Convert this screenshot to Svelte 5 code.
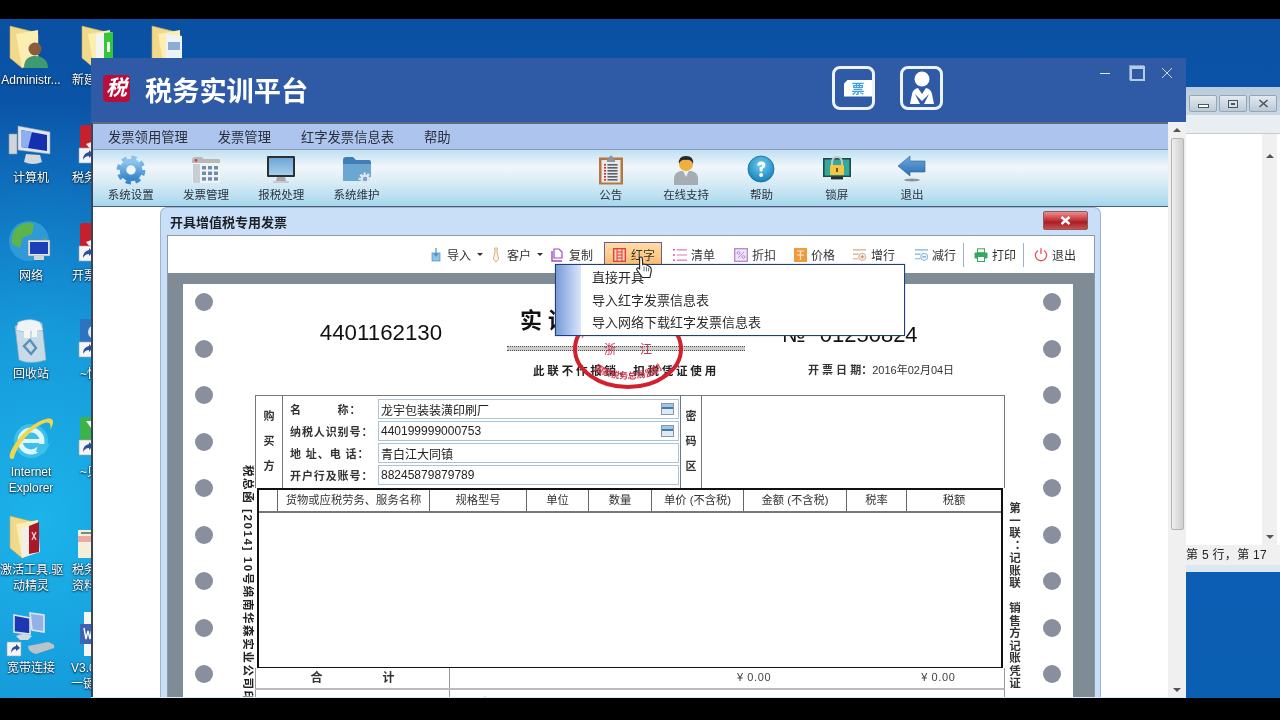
<script>
	// desktop shortcuts, the left column is fully visible, the second is cut by the app window
	const shortcuts = [
		{ icon: "userFolder", x: 8, y: 24, ly: 72, label: ["Administr..."], lx: 0, lw: 62 },
		{ icon: "greenFolder", x: 80, y: 24, ly: 72, label: ["新建文件夹"], lx: 72, lw: 70 },
		{ icon: "plainFolder", x: 150, y: 24, ly: 72, label: [], lx: 150, lw: 40 },
		{ icon: "computer", x: 8, y: 124, ly: 170, label: ["计算机"], lx: 0, lw: 62 },
		{ icon: "redApp", x: 78, y: 124, ly: 170, label: ["税务实训"], lx: 72, lw: 70 },
		{ icon: "globe", x: 8, y: 220, ly: 268, label: ["网络"], lx: 0, lw: 62 },
		{ icon: "redApp", x: 78, y: 222, ly: 268, label: ["开票系统"], lx: 72, lw: 70 },
		{ icon: "bin", x: 10, y: 318, ly: 366, label: ["回收站"], lx: 0, lw: 62 },
		{ icon: "blueLink", x: 78, y: 318, ly: 366, label: ["~快捷"], lx: 80, lw: 70 },
		{ icon: "ie", x: 8, y: 416, ly: 464, label: ["Internet", "Explorer"], lx: 0, lw: 62 },
		{ icon: "greenLink", x: 78, y: 416, ly: 464, label: ["~贝"], lx: 80, lw: 70 },
		{ icon: "redFolder", x: 8, y: 514, ly: 562, label: ["激活工具.驱", "动精灵"], lx: 0, lw: 62 },
		{ icon: "doc", x: 78, y: 530, ly: 562, label: ["税务实", "资料"], lx: 72, lw: 70 },
		{ icon: "network", x: 6, y: 612, ly: 660, label: ["宽带连接"], lx: 0, lw: 62 },
		{ icon: "word", x: 78, y: 612, ly: 660, label: ["V3.0", "一键"], lx: 71, lw: 70 }
	];

	const menus = ["发票领用管理", "发票管理", "红字发票信息表", "帮助"];
	const toolsLeft = [
		{ icon: "gear", label: "系统设置" },
		{ icon: "calendar", label: "发票管理" },
		{ icon: "monitor", label: "报税处理" },
		{ icon: "gearFolder", label: "系统维护" }
	];
	const toolsRight = [
		{ icon: "clipboard", label: "公告" },
		{ icon: "agent", label: "在线支持" },
		{ icon: "help", label: "帮助" },
		{ icon: "lock", label: "锁屏" },
		{ icon: "back", label: "退出" }
	];

	const actions = [
		{ icon: "aImport", label: "导入", caret: true, w: 60 },
		{ icon: "aTie", label: "客户", caret: true, w: 62 },
		{ icon: "aCopy", label: "复制", w: 55 },
		{ icon: "aRed", label: "红字", w: 58, active: true },
		{ icon: "aList", label: "清单", w: 61 },
		{ icon: "aDisc", label: "折扣", w: 59 },
		{ icon: "aPrice", label: "价格", w: 60 },
		{ icon: "aAdd", label: "增行", w: 61 },
		{ icon: "aSub", label: "减行", w: 51, sep: true },
		{ icon: "aPrint", label: "打印", w: 51, sep: true },
		{ icon: "aExit", label: "退出", w: 43 }
	];

	const popup = ["直接开具", "导入红字发票信息表", "导入网络下载红字发票信息表"];

	const buyer = [
		{ label: "名　　　称：", value: "龙宇包装装潢印刷厂", pick: true },
		{ label: "纳税人识别号：", value: "440199999000753", pick: true },
		{ label: "地 址、电 话：", value: "青白江大同镇" },
		{ label: "开户行及账号：", value: "88245879879789" }
	];

	const columns = [
		{ w: 19, t: "" },
		{ w: 152, t: "货物或应税劳务、服务名称" },
		{ w: 97, t: "规格型号" },
		{ w: 62, t: "单位" },
		{ w: 63, t: "数量" },
		{ w: 92, t: "单价 (不含税)" },
		{ w: 103, t: "金额 (不含税)" },
		{ w: 60, t: "税率" },
		{ w: 98, t: "税额" }
	];

	const holes = Array.from({ length: 9 });
</script>

{#snippet glyph(name)}
	{#if name === "userFolder" || name === "greenFolder" || name === "plainFolder" || name === "redFolder"}
		<svg width="42" height="46" viewBox="0 0 42 46">
			<path d="M2 2 L26 8 L30 10 V36 L14 44 L2 34 Z" fill="#f0d98a" stroke="#c9a95a" stroke-width=".6" />
			<path d="M8 10 L30 6 V36 L14 44 Z" fill="#fbeeb0" />
			{#if name === "greenFolder"}
				<path d="M16 10 L33 8 V40 L16 44 Z" fill="#f2f5f2" />
				<path d="M24 9 L33 8 V40 L24 42 Z" fill="#35c53a" />
				<path d="M27 18 h3 v10 h-3 Z" fill="#e8fbe8" />
			{/if}
			{#if name === "plainFolder"}
				<path d="M16 10 L32 12 V44 L16 44 Z" fill="#eef3f8" />
				<path d="M18 18 h12 v8 h-12 Z" fill="#8aaed0" />
			{/if}
			{#if name === "redFolder"}
				<path d="M13 14 L30 8 L32 38 L14 44 Z" fill="#f2efe8" />
				<path d="M21 12 L31 8 V38 L21 40 Z" fill="#a81826" />
				<path d="M24 18 l4 8 M28 18 l-4 8" stroke="#f5c8c8" stroke-width="1.4" />
			{/if}
			{#if name === "userFolder"}
				<circle cx="27" cy="25" r="6.5" fill="#8a5c3c" />
				<path d="M16 44 C16 34 22 32 27 32 C33 32 40 35 40 44 Z" fill="#3f9a72" />
			{/if}
		</svg>
	{:else if name === "computer"}
		<svg width="44" height="44" viewBox="0 0 44 44">
			<rect x="1" y="10" width="8" height="20" fill="#cfd6da" stroke="#8a979e" stroke-width=".6" />
			<path d="M10 2 L42 8 V30 L10 26 Z" fill="#dfe6ea" stroke="#98a5ad" stroke-width=".6" />
			<path d="M13 6 L39 11 V27 L13 23 Z" fill="#1430b0" />
			<path d="M13 6 L24 8 L20 24 L13 23 Z" fill="#8fb0ee" />
			<path d="M18 30 L32 31 L34 38 Q25 42 16 38 Z" fill="#d3d9dc" />
		</svg>
	{:else if name === "redApp" || name === "greenLink" || name === "blueLink"}
		<svg width="34" height="42" viewBox="0 0 34 42">
			{#if name === "greenLink"}
				<rect x="2" y="1" width="30" height="27" rx="2" fill="#3ab34a" /><path d="M8 5 L24 5 L16 16 Z" fill="#f4fff0" />
			{:else if name === "blueLink"}
				<rect x="2" y="1" width="30" height="27" rx="2" fill="#2d74c0" /><circle cx="17" cy="14" r="7" fill="#d6e8f8" />
			{:else}
				<rect x="2" y="1" width="30" height="27" rx="3" fill="#c6202f" /><path d="M8 20 Q18 18 24 6 Q24 20 12 25 Z" fill="#fbeaea" />
			{/if}
			<rect x="1" y="24" width="15" height="15" fill="#f5f5f5" stroke="#9aa3ab" stroke-width=".6" />
			<path d="M5 36 Q5 29 11 28 V26 L15 30 L11 34 V32 Q7 32 5 36 Z" fill="#2a4f9c" />
		</svg>
	{:else if name === "globe"}
		<svg width="44" height="44" viewBox="0 0 44 44">
			<circle cx="21" cy="21" r="20" fill="#2f9ad8" />
			<path d="M8 8 Q18 0 26 4 L24 14 L14 18 L12 28 L4 24 Q3 14 8 8 Z" fill="#5cb54a" />
			<path d="M26 24 L38 18 L40 24 L30 38 L26 34 Z" fill="#5cb54a" />
			<rect x="20" y="20" width="22" height="16" fill="#dfe6ea" stroke="#7c8a92" stroke-width=".6" />
			<rect x="22" y="22" width="18" height="12" fill="#1d3fb5" />
			<path d="M26 36 h10 v4 h-10 Z" fill="#cfd6da" />
		</svg>
	{:else if name === "bin"}
		<svg width="40" height="46" viewBox="0 0 40 46">
			<path d="M5 8 L32 5 L36 42 Q20 47 9 42 Z" fill="#c8dbe8" stroke="#8ea6b6" stroke-width=".7" />
			<path d="M8 4 Q20 -1 30 4 L33 12 Q18 16 6 12 Z" fill="#eef4f8" stroke="#9fb4c2" stroke-width=".6" />
			<path d="M14 12 h6 v8 h-6 Z M22 10 h5 v9 h-5 Z" fill="#f5f5f5" />
			<path d="M14 28 L20 22 L26 30 L21 36 Z" fill="none" stroke="#5d8fb8" stroke-width="2.4" />
		</svg>
	{:else if name === "ie"}
		<svg width="46" height="46" viewBox="0 0 46 46">
			<ellipse cx="23" cy="25" rx="17" ry="17" fill="#3cc0ea" />
			<circle cx="23" cy="25" r="11" fill="none" stroke="#dff6fd" stroke-width="5" />
			<rect x="12" y="23" width="24" height="4" fill="#dff6fd" />
			<path d="M30 28 H42 L36 38 L28 36 Z" fill="#3cc0ea" />
			<path d="M2 42 C-1 36 18 8 38 3 C46 1 47 6 42 14 C44 6 40 5 34 8 C20 15 8 32 6 42 Q4 44 2 42 Z" fill="#f1d64a" />
		</svg>
	{:else if name === "doc"}
		<svg width="16" height="28" viewBox="0 0 16 28">
			<rect width="16" height="28" fill="#f4efd9" /><rect y="6" width="16" height="6" fill="#e9a9a4" /><rect x="3" y="2" width="10" height="2" fill="#7a8a7a" />
		</svg>
	{:else if name === "network"}
		<svg width="50" height="50" viewBox="0 0 50 50">
			<path d="M8 3 L24 6 V22 L8 20 Z" fill="#1c36b4" stroke="#dfe6ea" stroke-width="1.6" />
			<path d="M24 1 L38 3 V20 L26 18 Z" fill="#93b1e8" stroke="#dfe6ea" stroke-width="1.6" />
			<path d="M10 24 Q18 20 26 24 L22 28 H14 Z" fill="#d3d9dc" />
			<rect x="1" y="30" width="14" height="14" fill="#f5f5f5" stroke="#9aa3ab" stroke-width=".6" />
			<path d="M5 41 Q5 35 10 34 V32 L14 36 L10 39 V37 Q7 37 5 41 Z" fill="#2a4f9c" />
			<path d="M22 34 L42 30 Q50 32 48 36 L30 42 Q22 40 22 34 Z" fill="#b9c3c8" />
		</svg>
	{:else if name === "word"}
		<svg width="34" height="46" viewBox="0 0 34 46">
			<rect x="6" y="0" width="24" height="44" fill="#f4f6f8" /><rect x="2" y="12" width="17" height="20" fill="#3e63b4" />
			<path d="M6 16 l2 11 l2 -8 l2 8 l2 -11" fill="none" stroke="#fff" stroke-width="1.4" />
		</svg>
	{:else if name === "gear"}
		<svg width="30" height="30" viewBox="0 0 30 30">
			<defs><linearGradient id="gearFill" x1="0" y1="0" x2="0" y2="1"><stop offset="0" stop-color="#8cc4ee" /><stop offset="1" stop-color="#3b87cd" /></linearGradient></defs>
			<circle cx="15" cy="15" r="12.4" fill="none" stroke="url(#gearFill)" stroke-width="4" stroke-dasharray="5.2 4.53" />
			<circle cx="15" cy="15" r="8" fill="none" stroke="url(#gearFill)" stroke-width="6.5" />
			<circle cx="15" cy="15" r="3.6" fill="#eef6fc" />
		</svg>
	{:else if name === "calendar"}
		<svg width="30" height="30" viewBox="0 0 30 30">
			<path d="M1 6 Q1 2 4 2 H11 L13 4 H28 Q29 4 29 6 V28 H1 Z" fill="#b8b8b8" />
			<rect x="1" y="8" width="28" height="20" fill="#f2f2f2" />
			<circle cx="5" cy="5.5" r="1.4" fill="#d34040" />
			<rect x="2" y="9" width="7" height="19" fill="#c9ced6" />
			{#each [0, 1, 2] as r}
				{#each [0, 1, 2] as c}
					<rect x={11 + c * 6} y={11 + r * 5.6} width="4" height="3.4" fill="#6a8cb0" />
				{/each}
			{/each}
		</svg>
	{:else if name === "monitor"}
		<svg width="30" height="30" viewBox="0 0 30 30">
			<rect x="1" y="1" width="28" height="21" rx="1" fill="#2c2f33" />
			<defs><linearGradient id="scr" x1="0" y1="0" x2="0" y2="1"><stop offset="0" stop-color="#6da6d8" /><stop offset="1" stop-color="#a8cdea" /></linearGradient></defs>
			<rect x="3" y="3" width="24" height="17" fill="url(#scr)" />
			<path d="M11 22 H19 L20 26 H10 Z" fill="#a9a9a9" /><rect x="7" y="26" width="16" height="2" rx="1" fill="#c9c9c9" />
		</svg>
	{:else if name === "gearFolder"}
		<svg width="30" height="30" viewBox="0 0 30 30">
			<path d="M1 5 Q1 2 4 2 H11 L14 5 H27 Q29 5 29 7 V25 Q29 26 27 26 H3 Q1 26 1 25 Z" fill="#3f7fb5" />
			<path d="M1 9 H29 V25 Q29 26 27 26 H3 Q1 26 1 25 Z" fill="#6ea6d2" />
			<circle cx="23" cy="24" r="5" fill="none" stroke="#e8ecef" stroke-width="3" stroke-dasharray="2 1.6" />
			<circle cx="23" cy="24" r="3.4" fill="none" stroke="#dfe4e8" stroke-width="2.4" />
		</svg>
	{:else if name === "clipboard"}
		<svg width="26" height="30" viewBox="0 0 26 30">
			<rect x="1" y="2.5" width="24" height="27" fill="#b4783e" />
			<rect x="3.5" y="5" width="19" height="22.5" fill="#e9e9ec" />
			<path d="M9 4 H11 Q11 0.5 13 0.5 Q15 0.5 15 4 H17 V7 H9 Z" fill="#8a98a5" />
			{#each [9, 12, 15, 18, 21, 24] as ly}
				<rect x="6" y={ly} width="2" height="1.6" fill="#cc2f3a" />
				<rect x="9.5" y={ly} width="10" height="1.6" fill="#5c6168" />
			{/each}
		</svg>
	{:else if name === "agent"}
		<svg width="28" height="30" viewBox="0 0 28 30">
			<path d="M2 30 V24 Q2 17 9 16 H19 Q26 17 26 24 V30 Z" fill="#a5adb2" />
			<path d="M11 16 L14 22 L17 16 Z" fill="#eef0f0" />
			<circle cx="14" cy="9" r="7" fill="#f0b040" />
			<path d="M7 9 Q6 1 14 1 Q22 1 21 9 Q19 4 14 5 Q9 4 7 9 Z" fill="#26282c" />
		</svg>
	{:else if name === "help"}
		<svg width="28" height="28" viewBox="0 0 28 28">
			<defs><radialGradient id="helpFill" cx=".5" cy=".35" r=".7"><stop offset="0" stop-color="#6fd0ef" /><stop offset="1" stop-color="#1277b8" /></radialGradient></defs>
			<circle cx="14" cy="14" r="13" fill="url(#helpFill)" stroke="#0f6aa6" stroke-width=".8" />
			<path d="M10 10.5 Q10.5 6.5 14.4 6.6 Q18.6 7 18.4 10.4 Q18 12.6 15.6 13.8 L15.4 16.6 H12.8 L12.6 12.4 Q15.4 11.6 15.4 10.2 Q14.6 8.6 13 10.6 Z" fill="#fff" />
			<circle cx="14.1" cy="20" r="1.9" fill="#fff" />
		</svg>
	{:else if name === "lock"}
		<svg width="30" height="28" viewBox="0 0 30 28">
			<rect x="1" y="3" width="28" height="19" fill="#1d4a4e" />
			<rect x="2.6" y="4.6" width="24.8" height="16" fill="#35a89a" />
			<path d="M10 11 V8 Q10 2 15 2 Q20 2 20 8 V11" fill="none" stroke="#c2c7c9" stroke-width="2" />
			<rect x="8" y="10" width="14" height="10" rx="1" fill="#f1c83f" />
			<rect x="14" y="13" width="2" height="4" fill="#6a5a10" />
			<rect x="9" y="22" width="12" height="2.4" fill="#2a2e30" />
		</svg>
	{:else if name === "back"}
		<svg width="30" height="28" viewBox="0 0 30 28">
			<defs><linearGradient id="backFill" x1="0" y1="0" x2="0" y2="1"><stop offset="0" stop-color="#6fa9dc" /><stop offset="1" stop-color="#2b6fb3" /></linearGradient></defs>
			<path d="M1 11 L13 1 V6 H28 V17 H13 V21 Z" fill="url(#backFill)" stroke="#2a5f9a" stroke-width=".6" />
			<ellipse cx="15" cy="25" rx="8" ry="1.4" fill="#8f969b" />
		</svg>
	{:else if name === "aImport"}
		<svg width="10" height="15" viewBox="0 0 10 15"><rect x="1" y="6" width="8" height="8" fill="#8ec4ea" stroke="#4f8cc0" stroke-width=".7" /><path d="M5 1 V9 M3 6.5 L5 9 L7 6.5" fill="none" stroke="#4f8cc0" stroke-width="1.2" /></svg>
	{:else if name === "aTie"}
		<svg width="8" height="16" viewBox="0 0 8 16"><path d="M2.4 1 H5.6 L4.8 4 L6.6 12 L4 15 L1.4 12 L3.2 4 Z" fill="#fbf3e4" stroke="#cfa872" stroke-width=".9" /></svg>
	{:else if name === "aCopy"}
		<svg width="14" height="14" viewBox="0 0 14 14"><path d="M3 1 H8 L11 4 V10 H3 Z" fill="#fff" stroke="#a04bc0" stroke-width="1.2" /><path d="M1 3 V13 H11" fill="none" stroke="#a04bc0" stroke-width="1.4" /></svg>
	{:else if name === "aRed"}
		<svg width="13" height="14" viewBox="0 0 13 14"><rect x=".7" y=".7" width="11.6" height="12.6" fill="#fbd9a8" stroke="#e0344b" stroke-width="1.3" /><path d="M4 1 V13 M9 1 V13 M4 4 H9 M4 7 H9 M4 10 H9" stroke="#e0344b" /></svg>
	{:else if name === "aList"}
		<svg width="15" height="14" viewBox="0 0 15 14"><path d="M4 1.5 H15 M4 7 H15 M4 12.5 H15" stroke="#e07ab4" stroke-width="1.2" /><path d="M0 1.5 H2 M0 7 H2 M0 12.5 H2" stroke="#d84fa0" stroke-width="1.6" /></svg>
	{:else if name === "aDisc"}
		<svg width="14" height="14" viewBox="0 0 14 14"><rect x=".7" y=".7" width="12.6" height="12.6" fill="#efe5f8" stroke="#ad7ecf" stroke-width="1.2" /><path d="M4 10 L10 4" stroke="#b78dd8" /><circle cx="4.5" cy="5" r="1.4" fill="none" stroke="#b78dd8" /><circle cx="9.5" cy="9" r="1.4" fill="none" stroke="#b78dd8" /></svg>
	{:else if name === "aPrice"}
		<svg width="13" height="14" viewBox="0 0 13 14"><rect width="13" height="14" fill="#f09a3e" /><path d="M3 3 H10 M3 7 H10 M6.5 3 V12" stroke="#ffe8c8" stroke-width="1.2" /></svg>
	{:else if name === "aAdd"}
		<svg width="15" height="14" viewBox="0 0 15 14"><path d="M0 1.5 H14 M0 6 H6 M0 11 H6" stroke="#d8a88c" stroke-width="1.2" /><circle cx="10" cy="9" r="3.8" fill="#fdf3ea" stroke="#c9a38a" /><path d="M8 9 H12 M10 7 V11" stroke="#c77f5a" /></svg>
	{:else if name === "aSub"}
		<svg width="15" height="14" viewBox="0 0 15 14"><path d="M1 1.5 H15 M1 6 H7 M1 11 H7" stroke="#7ab0dc" stroke-width="1.2" /><circle cx="11" cy="9" r="3.8" fill="#eef6fc" stroke="#7ab0dc" /><path d="M9 9 H13" stroke="#4a88c2" /></svg>
	{:else if name === "aPrint"}
		<svg width="14" height="14" viewBox="0 0 14 14"><rect x="3.5" y="0.8" width="7" height="4" fill="#fff" stroke="#35a860" /><rect x=".5" y="4.5" width="13" height="6" rx="1" fill="#35a860" /><rect x="3.5" y="8.5" width="7" height="5" fill="#fff" stroke="#35a860" /></svg>
	{:else if name === "aExit"}
		<svg width="15" height="15" viewBox="0 0 15 15"><path d="M4.2 3.2 A6 6 0 1 0 10.8 3.2" fill="none" stroke="#e0505e" stroke-width="1.4" /><path d="M7.5 .8 V7" stroke="#e0505e" stroke-width="1.4" /></svg>
	{/if}
{/snippet}

<div class="desktop">
	{#each shortcuts as s}
		<div class="shortcut" style="left:{s.x}px;top:{s.y}px">{@render glyph(s.icon)}</div>
		{#each s.label as line, i}
			<span class="shortcut-label" class:second={s.lx > 60} style="left:{s.lx}px;top:{s.ly + i * 16}px;width:{s.lw}px">{line}</span>
		{/each}
	{/each}

	<!-- the editor window behind the app -->
	<section class="editor">
		<div class="editor-title">
			<span class="win-btn"><i class="btn-min"></i></span>
			<span class="win-btn"><i class="btn-max"></i></span>
			<span class="win-btn">
				<svg width="11" height="9" viewBox="0 0 11 9"><path d="M1.5 1 L9.5 8 M9.5 1 L1.5 8" stroke="#4a5560" stroke-width="1.6" /></svg>
			</span>
		</div>
		<div class="editor-ribbon"></div>
		<div class="editor-body">
			<div class="editor-text"></div>
			<div class="editor-scroll"><i class="arrow up"></i><i class="arrow down"></i></div>
		</div>
		<div class="editor-status">第 5 行，第 17</div>
	</section>

	<section class="app">
		<header class="app-head">
			<div class="logo">税</div>
			<h1>税务实训平台</h1>
			<div class="quick">
				<div class="quick-btn">
					<div class="ticket">票</div>
				</div>
				<div class="quick-btn">
					<svg width="30" height="36" viewBox="0 0 30 36">
						<circle cx="15" cy="9" r="7.5" fill="#fff" />
						<path d="M3 34 L5 24 Q6 19 11 18 L15 24 L19 18 Q24 19 25 24 L27 34 H17 L22 24 L15 31 L8 24 L13 34 Z" fill="#fff" />
					</svg>
				</div>
			</div>
			<div class="win-controls">
				<span class="ctl-min"></span>
				<span class="ctl-max"></span>
				<svg class="ctl-close" width="12" height="12" viewBox="0 0 12 12"><path d="M1 1 L11 11 M11 1 L1 11" stroke="#cfdcf0" stroke-width="1" /></svg>
			</div>
		</header>

		<div class="app-body">
			<main class="workspace">
				<nav class="menubar">
					{#each menus as m}<span>{m}</span>{/each}
				</nav>
				<div class="ribbon">
					<div class="tool-group">
						{#each toolsLeft as t}
							<div class="tool"><div class="tool-icon">{@render glyph(t.icon)}</div><span>{t.label}</span></div>
						{/each}
					</div>
					<div class="tool-group right">
						{#each toolsRight as t}
							<div class="tool"><div class="tool-icon">{@render glyph(t.icon)}</div><span>{t.label}</span></div>
						{/each}
					</div>
				</div>

				<div class="canvas">
					<section class="dialog">
						<div class="dialog-title">
							<strong>开具增值税专用发票</strong>
							<button class="dialog-close" aria-label="关闭">
								<svg width="11" height="9" viewBox="0 0 11 9"><path d="M1.5 1 L9.5 8 M9.5 1 L1.5 8" stroke="#fff" stroke-width="2.4" /></svg>
							</button>
						</div>
						<div class="dialog-inner">
							<div class="actions">
								{#each actions as a}
									<div class="action" class:active={a.active} style="width:{a.w}px">
										<span class="action-icon">{@render glyph(a.icon)}</span>
										<span>{a.label}</span>
										{#if a.caret}<i class="caret"></i>{/if}
									</div>
									{#if a.sep}<i class="action-sep"></i>{/if}
								{/each}
							</div>

							<div class="paper-wrap">
								<div class="paper">
									<div class="holes">
										{#each holes as _}<i class="hole"></i>{/each}
									</div>
									<div class="note-left">税总函 [2014] 10号绵南华森实业公司印制</div>
									<div class="sheet">
										<div class="sheet-head">
											<div class="code">4401162130</div>
											<div class="head-mid">
												<div class="invoice-title">实训增值税专用发票</div>
												<div class="dbl-line"></div>
												<div class="invoice-note">此联不作报销、扣税凭证使用</div>
											</div>
											<div class="head-right">
												<div class="invoice-no">№ <span>01250824</span></div>
												<div class="invoice-date">开 票 日 期：<span>2016年02月04日</span></div>
											</div>
										</div>

										<div class="buyer">
											<div class="side-title"><b>购</b><b>买</b><b>方</b></div>
											<div class="fields">
												{#each buyer as f}
													<div class="field">
														<label>{f.label}</label>
														<div class="input">
															<span>{f.value}</span>
															{#if f.pick}<i class="picker"></i>{/if}
														</div>
													</div>
												{/each}
											</div>
											<div class="side-title narrow"><b>密</b><b>码</b><b>区</b></div>
											<div class="cipher"></div>
										</div>

										<div class="items">
											<div class="items-head">
												{#each columns as c}
													<div style="width:{c.w}px">{c.t}</div>
												{/each}
											</div>
										</div>

										<div class="totals">
											<div class="total-label"><span>合</span><span>计</span></div>
											<div class="total-values"><span>¥ 0.00</span><span>¥ 0.00</span></div>
										</div>
										<div class="totals words">
											<div class="total-label"></div>
											<div class="total-values"><em>零元整</em><span>¥ 0.00</span></div>
										</div>
									</div>
									<div class="note-right">第一联：记账联　销售方记账凭证</div>
									<div class="holes right">
										{#each holes as _}<i class="hole"></i>{/each}
									</div>

									<!-- stamp sits over the title block -->
									<svg class="seal" width="114" height="84" viewBox="0 0 114 84">
										<ellipse cx="57" cy="42" rx="53" ry="38" fill="none" stroke="#d3202e" stroke-width="4" />
										<path id="sealTop" d="M9 40 A48 31 0 0 1 105 40" fill="none" />
										<path id="sealBottom" d="M16 50 A41 22 0 0 0 98 50" fill="none" />
										<text class="seal-text spread"><textPath href="#sealTop" startOffset="50%" text-anchor="middle">全国统一发票监制章</textPath></text>
										<text class="seal-big" x="57" y="47" text-anchor="middle">浙　　江</text>
										<text class="seal-text"><textPath href="#sealBottom" startOffset="50%" text-anchor="middle">国家税务总局监制</textPath></text>
									</svg>
								</div>
							</div>

							<div class="popup">
								<div class="popup-gutter"></div>
								<ul>
									{#each popup as p}<li>{p}</li>{/each}
								</ul>
							</div>
							<svg class="cursor" width="18" height="23" viewBox="0 0 16 21">
								<path d="M4 1.2 Q5.6 0.4 6.4 1.6 L6.8 8 L8 7.4 L9.6 7.8 L11.4 8.6 L13.4 9.8 Q15 11 14.6 14 L13.4 19.6 H6.6 L1.4 12.6 Q1 11 2.6 10.8 L4 11.8 Z" fill="#fff" stroke="#222" stroke-width="1" />
								<path d="M8 9.6 V14 M10.2 10 V14 M12.2 10.8 V14" stroke="#444" stroke-width=".7" />
							</svg>
						</div>
					</section>
				</div>
			</main>
			<div class="scrollbar">
				<i class="arrow up"></i>
				<div class="thumb"></div>
				<i class="arrow down"></i>
			</div>
		</div>
	</section>

	<div class="bar top"></div>
	<div class="bar bottom"></div>
</div>

<style>
	:global(body) {
		margin: 0;
		background: #000;
	}

	.desktop {
		position: relative;
		width: 1280px;
		height: 720px;
		overflow: hidden;
		font-family: "Liberation Sans", "Noto Sans CJK SC", sans-serif;
		color: #222;
		filter: blur(0.45px);
		background:
			radial-gradient(ellipse 340px 420px at 40px 520px, #1cb4ea 0%, #169ada 45%, rgba(20, 120, 200, 0) 100%),
			linear-gradient(180deg, #0a50a2 0%, #0b5cb4 45%, #0b5fb2 100%);
	}

	.bar {
		position: absolute;
		left: 0;
		width: 100%;
		background: #000;
	}
	.bar.top {
		top: 0;
		height: 19px;
	}
	.bar.bottom {
		top: 698px;
		height: 22px;
	}

	/* desktop */
	.shortcut {
		position: absolute;
		line-height: 0;
	}
	.shortcut-label {
		position: absolute;
		color: #fff;
		font-size: 12px;
		line-height: 16px;
		white-space: nowrap;
		text-align: center;
		text-shadow: 0 1px 2px #06263f, 0 0 2px #06263f;
	}
	.shortcut-label.second {
		text-align: left;
	}

	/* editor behind */
	.editor {
		position: absolute;
		left: 1170px;
		top: 87px;
		width: 110px;
		height: 485px;
		display: flex;
		flex-direction: column;
		background: #dce7f1;
	}
	.editor-title {
		height: 28px;
		display: flex;
		justify-content: flex-end;
		align-items: flex-start;
		gap: 2px;
		padding: 8px 3px 0 0;
		box-sizing: border-box;
		background: linear-gradient(#b9cadb, #cbd8e4);
	}
	.win-btn {
		width: 28px;
		height: 17px;
		box-sizing: border-box;
		border: 1px solid #94a7b8;
		border-radius: 2px;
		background: linear-gradient(#e2e9f0, #bccad6);
		display: flex;
		align-items: center;
		justify-content: center;
	}
	.btn-min {
		width: 11px;
		height: 4px;
		margin-top: 4px;
		box-sizing: border-box;
		border: 1px solid #4a5560;
		background: #fff;
	}
	.btn-max {
		width: 10px;
		height: 8px;
		box-sizing: border-box;
		border: 1px solid #4a5560;
		box-shadow: inset 0 0 0 2px #d8e0e8, inset 0 0 0 4px #4a5560;
	}
	.editor-ribbon {
		height: 18px;
		background: #e9eef3;
		border-bottom: 1px solid #c3ccd5;
	}
	.editor-body {
		flex: 1;
		display: flex;
		background: #fff;
	}
	.editor-text {
		flex: 1;
	}
	.editor-scroll {
		width: 15px;
		margin-right: 3px;
		background: #f0f0f0;
		display: flex;
		flex-direction: column;
		justify-content: space-between;
		align-items: center;
		padding: 20px 0 6px;
	}
	.editor-status {
		height: 20px;
		padding: 0 0 0 16px;
		font-size: 12px;
		line-height: 20px;
		letter-spacing: 0.3px;
		background: #f0f0f0;
		color: #222;
		white-space: nowrap;
		margin-bottom: 7px;
		overflow: hidden;
	}

	.arrow {
		display: block;
		width: 0;
		height: 0;
		border-left: 4px solid transparent;
		border-right: 4px solid transparent;
	}
	.arrow.up {
		border-bottom: 4px solid #555;
	}
	.arrow.down {
		border-top: 4px solid #555;
	}

	/* app window */
	.app {
		position: absolute;
		left: 91px;
		top: 58px;
		width: 1095px;
		height: 640px;
		display: flex;
		flex-direction: column;
		box-sizing: border-box;
		border-bottom: 1px solid #d8f0f8;
		background: #2f5aa6;
		overflow: hidden;
	}
	.app-head {
		height: 64px;
		flex: none;
		display: flex;
		align-items: center;
		padding-left: 12px;
		color: #fff;
		box-sizing: border-box;
		background: #2e5aa6;
	}
	.logo {
		width: 27px;
		height: 27px;
		margin-top: -3px;
		border-radius: 4px;
		background: #b80f3a;
		color: #fff;
		font: italic 700 21px/27px "Liberation Serif", "Noto Sans CJK SC", serif;
		text-align: center;
	}
	.app-head h1 {
		margin: 3px 0 0 15px;
		font-size: 27.2px;
		line-height: 34px;
		font-weight: 700;
		width: 163px;
		white-space: nowrap;
	}
	.quick {
		display: flex;
		gap: 25px;
		margin-left: 524px;
		margin-top: -4px;
	}
	.quick-btn {
		width: 43px;
		height: 44px;
		box-sizing: border-box;
		border: 3px solid #eef3fb;
		border-radius: 8px;
		display: flex;
		align-items: center;
		justify-content: center;
	}
	.ticket {
		width: 28px;
		height: 17px;
		margin-left: 9px;
		background: #fff;
		color: #3fa0e8;
		font-size: 13px;
		line-height: 17px;
		font-weight: 700;
		text-align: center;
		clip-path: polygon(4px 0, 100% 0, 100% 100%, 0 100%, 0 4px);
	}
	.win-controls {
		display: flex;
		align-items: center;
		gap: 20px;
		margin-left: 157px;
		margin-top: -34px;
	}
	.ctl-min {
		width: 10px;
		height: 1px;
		background: #dfe8f6;
	}
	.ctl-max {
		width: 11px;
		height: 10px;
		border: 2px solid #b6cbe8;
		border-top-width: 3px;
		box-shadow: -1px -1px 0 #7f9dca;
	}
	.ctl-close {
		margin-left: -4px;
	}

	.app-body {
		flex: 1;
		min-height: 0;
		display: flex;
	}
	.workspace {
		flex: 1;
		min-width: 0;
		display: flex;
		flex-direction: column;
		background: #fff;
		border-left: 2px solid #3a4658;
		border-top: 2px solid #5e6b7f;
	}
	.menubar {
		height: 25px;
		flex: none;
		display: flex;
		align-items: center;
		gap: 30px;
		padding-left: 15px;
		background: #adc4ef;
		border-bottom: 1px solid #8d9cb2;
		font-size: 13.3px;
		color: #2a2f3a;
	}
	.ribbon {
		height: 56px;
		flex: none;
		display: flex;
		background: linear-gradient(180deg, #bfe0f2 0%, #f1f6fa 30%, #dcedf6 55%, #a6d7ee 100%);
		border-bottom: 1px solid #46607c;
	}
	.tool-group {
		display: flex;
	}
	.tool-group.right {
		margin-left: 179px;
	}
	.tool {
		width: 75.3px;
		display: flex;
		flex-direction: column;
		align-items: center;
		padding-top: 5px;
		box-sizing: border-box;
		font-size: 11.5px;
		color: #2b3340;
	}
	.tool-icon {
		height: 31px;
		line-height: 0;
		display: flex;
		align-items: flex-start;
	}
	.tool span {
		line-height: 16px;
		margin-top: 1px;
	}

	.canvas {
		flex: 1;
		min-height: 0;
		padding: 0 67px;
		display: flex;
		flex-direction: column;
	}

	/* dialog */
	.dialog {
		flex: 1;
		min-height: 0;
		display: flex;
		flex-direction: column;
		padding: 0 5px 0 6px;
		background: #c9dff8;
		border: 1px solid #9fb3cb;
		border-bottom: none;
		border-radius: 7px 7px 0 0;
	}
	.dialog-title {
		height: 27px;
		flex: none;
		display: flex;
		align-items: center;
		justify-content: space-between;
		padding: 0 7px 0 3px;
		font-size: 13px;
	}
	.dialog-title strong {
		color: #1a1f28;
	}
	.dialog-close {
		width: 45px;
		height: 19px;
		padding: 0;
		margin-top: -3px;
		border: 1px solid #8e5a5a;
		border-radius: 2px;
		background: linear-gradient(#e89090 0%, #c8383c 45%, #a42024 60%, #c85050 100%);
		display: flex;
		align-items: center;
		justify-content: center;
	}
	.dialog-inner {
		flex: 1;
		min-height: 0;
		position: relative;
		display: flex;
		flex-direction: column;
		border: 1px solid #8c9aaa;
		border-bottom: none;
	}
	.actions {
		height: 37px;
		flex: none;
		display: flex;
		justify-content: flex-end;
		align-items: center;
		padding-right: 19px;
		background: #fff;
		font-size: 12px;
		color: #333;
	}
	.action {
		display: flex;
		align-items: center;
		flex: none;
		height: 26px;
		gap: 4px;
		padding-left: 2px;
		box-sizing: border-box;
		white-space: nowrap;
	}
	.action-icon {
		line-height: 0;
		width: 14px;
		display: flex;
		justify-content: center;
	}
	.action.active {
		padding-left: 7px;
		gap: 5px;
		margin-right: 9px;
		border: 1px solid #6c5c90;
		background: linear-gradient(#ffdda6, #fbb968);
	}
	.caret {
		width: 0;
		height: 0;
		margin-left: 2px;
		border-left: 3px solid transparent;
		border-right: 3px solid transparent;
		border-top: 3px solid #333;
	}
	.action-sep {
		width: 1px;
		height: 24px;
		flex: none;
		margin-right: 8px;
		background: #9db2c4;
	}

	.paper-wrap {
		flex: 1;
		min-height: 0;
		padding: 11px 21px 0 15px;
		background: #7f8c96;
		overflow: hidden;
	}
	.paper {
		position: relative;
		height: 100%;
		display: flex;
		background: #fff;
	}
	.holes {
		width: 56px;
		flex: none;
		display: flex;
		flex-direction: column;
		gap: 28.5px;
		padding: 9px 0 0 12px;
		box-sizing: border-box;
	}
	.holes.right {
		width: 50px;
		padding-left: 20px;
	}
	.hole {
		display: block;
		flex: none;
		width: 18px;
		height: 18px;
		border-radius: 50%;
		background: #8a8f9e;
	}
	.note-left {
		width: 16px;
		flex: none;
		margin-top: 181px;
		writing-mode: vertical-rl;
		text-orientation: sideways;
		font-size: 11.5px;
		font-weight: 700;
		line-height: 14px;
		letter-spacing: 1.6px;
		white-space: nowrap;
		color: #222;
	}
	.note-right {
		width: 18px;
		flex: none;
		margin-top: 210px;
		writing-mode: vertical-rl;
		font-size: 11.5px;
		font-weight: 700;
		line-height: 18px;
		letter-spacing: 1px;
		white-space: nowrap;
		color: #333;
		text-align: center;
	}

	.sheet {
		width: 750px;
		flex: none;
		display: flex;
		flex-direction: column;
	}
	.sheet-head {
		height: 111px;
		flex: none;
		display: flex;
	}
	.code {
		width: 252px;
		flex: none;
		padding-top: 36px;
		text-align: center;
		font-size: 22.3px;
		line-height: 26px;
		color: #111;
	}
	.head-mid {
		width: 238px;
		flex: none;
		display: flex;
		flex-direction: column;
		align-items: center;
	}
	.invoice-title {
		align-self: flex-start;
		margin: 24px 0 0 13px;
		font-size: 22px;
		line-height: 26px;
		font-weight: 700;
		letter-spacing: 6px;
		white-space: nowrap;
		color: #111;
	}
	.dbl-line {
		width: 100%;
		height: 3px;
		margin-top: 12px;
		border-top: 1px dotted #555;
		border-bottom: 1px dotted #555;
		background: #ccc;
	}
	.invoice-note {
		margin-top: 13px;
		font-size: 11.5px;
		line-height: 14px;
		font-weight: 700;
		letter-spacing: 2.8px;
		white-space: nowrap;
		color: #222;
	}
	.head-right {
		padding-left: 37px;
	}
	.invoice-no {
		margin-top: 38px;
		font-size: 22px;
		line-height: 26px;
		color: #111;
		white-space: nowrap;
	}
	.invoice-no span {
		margin-left: 8px;
	}
	.invoice-date {
		margin: 15px 0 0 26px;
		font-size: 11px;
		line-height: 14px;
		font-weight: 700;
		color: #333;
		white-space: nowrap;
	}
	.invoice-date span {
		font-weight: 400;
		font-size: 11px;
	}

	.buyer {
		height: 93px;
		flex: none;
		display: flex;
		box-sizing: border-box;
		border: 1px solid #777;
		border-bottom: none;
	}
	.side-title {
		width: 27px;
		flex: none;
		display: flex;
		flex-direction: column;
		justify-content: space-around;
		align-items: center;
		padding: 6px 0 10px;
		box-sizing: border-box;
		border-right: 1px solid #777;
		font-size: 11px;
		color: #333;
	}
	.side-title.narrow {
		width: 21px;
	}
	.fields {
		width: 398px;
		flex: none;
		display: flex;
		flex-direction: column;
		gap: 2px;
		padding: 3px 1px 0 7px;
		box-sizing: border-box;
		border-right: 1px solid #777;
	}
	.field {
		display: flex;
		align-items: center;
		height: 20px;
	}
	.field label {
		width: 88px;
		flex: none;
		font-size: 11px;
		font-weight: 700;
		letter-spacing: 0.9px;
		white-space: nowrap;
		color: #333;
	}
	.input {
		flex: 1;
		height: 20px;
		display: flex;
		align-items: center;
		justify-content: space-between;
		padding: 0 4px 0 2px;
		box-sizing: border-box;
		border: 1px solid #a8c4d8;
		font-size: 12px;
		color: #222;
	}
	.picker {
		display: block;
		width: 13px;
		height: 12px;
		box-sizing: border-box;
		border: 1px solid #8098b0;
		background: linear-gradient(#a9c3de 0 30%, #3f7bb5 30% 55%, #dfe9f2 55%);
	}
	.cipher {
		flex: 1;
	}

	.items {
		width: 746px;
		height: 180px;
		margin-left: 2px;
		flex: none;
		box-sizing: border-box;
		border: 2px solid #111;
		border-bottom-width: 1px;
		border-right-width: 2px;
	}
	.items-head {
		display: flex;
		height: 21px;
		border-bottom: 2px solid #777;
		font-size: 11.3px;
		color: #333;
	}
	.items-head div {
		flex: none;
		box-sizing: border-box;
		line-height: 21px;
		text-align: center;
		white-space: nowrap;
		border-right: 1px solid #666;
	}
	.items-head div:last-child {
		border-right: none;
		flex: 1;
	}

	.totals {
		height: 22px;
		flex: none;
		display: flex;
		box-sizing: border-box;
		border-left: 1px solid #999;
		border-right: 1px solid #999;
		border-bottom: 2px solid #bbb;
	}
	.totals.words {
		border-bottom: none;
		height: 14px;
	}
	.total-label {
		width: 193px;
		flex: none;
		display: flex;
		justify-content: center;
		gap: 60px;
		border-right: 1px solid #999;
		font-size: 12px;
		font-weight: 700;
		line-height: 20px;
		color: #333;
	}
	.total-values {
		flex: 1;
		position: relative;
		display: flex;
		padding-left: 287px;
		gap: 150px;
		font-size: 11px;
		line-height: 18px;
		color: #444;
		white-space: nowrap;
		letter-spacing: 0.6px;
	}
	.totals.words .total-values {
		padding-left: 6px;
		gap: 355px;
		line-height: 16px;
	}
	.totals.words em {
		font-style: normal;
		font-size: 12px;
		font-weight: 700;
		margin-top: 6px;
	}
	.totals.words span {
		margin-top: 4px;
	}

	.seal {
		position: absolute;
		left: 388px;
		top: 23px;
	}
	.seal-text {
		font-size: 9px;
		font-weight: 700;
		fill: #c8394f;
	}
	.seal-text.spread {
		letter-spacing: 3px;
	}
	.seal-big {
		font-size: 12px;
		fill: #c8394f;
	}

	/* dropdown of the active button */
	.popup {
		position: absolute;
		left: 387px;
		top: 28px;
		width: 350px;
		height: 72px;
		display: flex;
		box-sizing: border-box;
		border: 1px solid #1f3f7c;
		background: #fff;
		box-shadow: 0 0 1px #6a7ea0;
	}
	.popup-gutter {
		width: 25px;
		flex: none;
		background: linear-gradient(90deg, #7b9bd8, #bcd0f2 70%, #dce6f8);
	}
	.popup ul {
		list-style: none;
		margin: 0;
		padding: 2px 0 0 11px;
		font-size: 13px;
		line-height: 22.5px;
		color: #2a2a2a;
	}
	.cursor {
		position: absolute;
		left: 467px;
		top: 20px;
	}

	.scrollbar {
		width: 18px;
		flex: none;
		display: flex;
		flex-direction: column;
		align-items: center;
		background: #f0f0f0;
		padding-top: 6px;
		box-sizing: border-box;
	}
	.thumb {
		width: 13px;
		height: 392px;
		margin-top: 6px;
		border: 1px solid #b5b5b5;
		border-radius: 2px;
		box-sizing: border-box;
		background: linear-gradient(90deg, #eee, #cfcfcf);
	}
	.scrollbar .down {
		margin-top: auto;
		margin-bottom: 5px;
	}
</style>
